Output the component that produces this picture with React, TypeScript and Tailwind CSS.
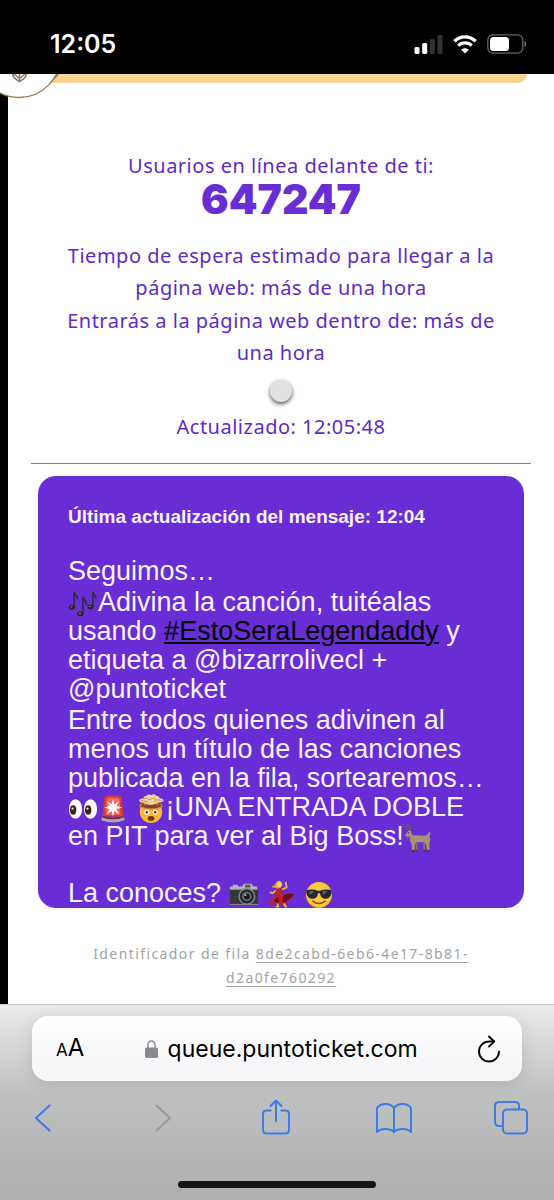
import type { ReactNode } from "react";

const StatusBar = () => {
  return (
    <header className="flex h-[74px] items-end justify-between bg-black pr-[27px] pb-[18px] pl-[50px] text-white">
      <time className="font-[Inter,sans-serif] text-[25px] leading-6 font-semibold">12:05</time>
      <div className="flex h-6 items-center gap-[10px]">
        <svg width="29" height="19" viewBox="0 0 28 19" role="img" aria-label="Señal">
          <rect x="0" y="12" width="5" height="7" rx="1.5" fill="#fff" />
          <rect x="7.700" y="8" width="5" height="11" rx="1.5" fill="#fff" />
          <rect x="15.400" y="4" width="5" height="15" rx="1.5" fill="#333" />
          <rect x="23" y="0" width="5" height="19" rx="1.5" fill="#333" />
        </svg>
        <svg width="24" height="19" viewBox="0 0 24 19" fill="none" role="img" aria-label="Wi-Fi">
          <path d="M1.300 6.200C7.500.4 16.500.4 22.700 6.200" stroke="#fff" strokeWidth="3.400" />
          <path d="M5.200 10.600c3.800-3.600 9.800-3.600 13.600 0" stroke="#fff" strokeWidth="3.200" />
          <path d="M8.200 14.700c2.300-2 5.300-2 7.600 0L12 18.600Z" fill="#fff" />
        </svg>
        <svg width="40" height="20" viewBox="0 0 40 20" fill="none" role="img" aria-label="Batería">
          <rect x=".8" y=".8" width="35" height="18.400" rx="5.500" stroke="#666" strokeWidth="1.300" />
          <rect x="3" y="3" width="19" height="14" rx="3.500" fill="#fff" />
          <path d="M37.500 6.800c2.300 1 2.300 5.400 0 6.400Z" fill="#777" />
        </svg>
      </div>
    </header>
  );
};

const Emoji = ({ label, children }: { label: string; children: ReactNode }) => {
  return (
    <svg viewBox="0 0 32 32" role="img" aria-label={label} className="-my-2 inline-block size-[30px] align-middle">
      {children}
    </svg>
  );
};

const Notes = () => (
  <Emoji label="notas musicales">
    <g fill="none" stroke="#2b2b36" strokeWidth="1.700">
      <path d="M6.500 19V3.500c1 3.500 4.500 3 3.500 7.500" />
      <path d="M16 25V8.500c1 4 4.500 4 3.500 8.500" />
      <path d="M26.500 18V3.500c1 3 4 3 3 7" />
    </g>
    <g fill="#24242b">
      <ellipse cx="4.200" cy="19.500" rx="3.300" ry="2.500" />
      <ellipse cx="13.300" cy="26.500" rx="3.500" ry="2.600" />
      <ellipse cx="24" cy="19" rx="3.300" ry="2.500" />
    </g>
    <g fill="#8d8d99">
      <ellipse cx="3.500" cy="19" rx="1.200" ry=".7" />
      <ellipse cx="12.600" cy="26" rx="1.200" ry=".7" />
      <ellipse cx="23.300" cy="18.500" rx="1.200" ry=".7" />
    </g>
  </Emoji>
);

const Eyes = () => (
  <Emoji label="ojos">
    <ellipse cx="8" cy="16" rx="7" ry="10.500" fill="#fff" />
    <ellipse cx="24" cy="16" rx="7" ry="10.500" fill="#fff" />
    <ellipse cx="5.500" cy="17" rx="3.400" ry="5" fill="#3c2415" />
    <ellipse cx="21.500" cy="17" rx="3.400" ry="5" fill="#3c2415" />
    <circle cx="4.800" cy="15.500" r="1.200" fill="#eee" />
    <circle cx="20.800" cy="15.500" r="1.200" fill="#eee" />
  </Emoji>
);

const Siren = () => (
  <Emoji label="sirena">
    <path d="M5 24 6.500 5Q7 1.500 11 1.500h10Q25 1.500 25.500 5L27 24Z" fill="#d93a3c" />
    <path d="M8 22 9.500 6Q10 4 12 4h8q2.500 0 3 3l1 15Z" fill="#ee6b65" />
    <path d="m16 5 1.600 6 5-3.500-3 5 6 2-6 1.500 3 5.500-5-3.500L16 24l-1.600-6-5 3.500 3-5.500-6-1.500 6-2-3-5 5 3.500Z" fill="#fff4ef" />
    <path d="M4.500 23q11.500 4 23 0l.8 5q-12.300 5-24.600 0Z" fill="#a5aab5" />
    <path d="M4.500 23q11.500 4 23 0v2q-11.500 4-23 0Z" fill="#7c2835" />
  </Emoji>
);

const MindBlown = () => (
  <Emoji label="cabeza explotando">
    <circle cx="16" cy="19" r="12" fill="#f8b92f" />
    <path d="M3.500 14Q16 19 28.500 14l-1-4h-23Z" fill="#d28b24" />
    <path d="M5 13l2-4 3 3 3-4 3 4 3-4 3 4 3-3 2 4q-11 5-22 0Z" fill="#8c4034" />
    <path d="M9 9Q4 10 3 6.500 5 4.500 8 5q-.5-3 3-3 2-2.500 5-1 4-2 6 1 3 0 3 2.500 4 0 4.500 3Q26 10 22 8.500q-1 3-6 3T9 9Z" fill="#f4d6a2" />
    <path d="M8 5q4-2 6 1 4-3 8 0M5 7q5 0 8 2M19 8q4-3 9-1" fill="none" stroke="#c49058" />
    <circle cx="11.500" cy="19.500" r="2.700" fill="#fff" />
    <circle cx="20.500" cy="19.500" r="2.700" fill="#fff" />
    <circle cx="11.500" cy="19.500" r="1.300" fill="#633016" />
    <circle cx="20.500" cy="19.500" r="1.300" fill="#633016" />
    <ellipse cx="16" cy="26" rx="3.500" ry="2.500" fill="#713515" />
  </Emoji>
);

const Goat = () => (
  <Emoji label="cabra">
    <path d="M7 8 9 13l13 .5q3 0 4.500-4l2 1-1.500 4q2 3 0 7l.5 7.500h-3l-1-6-2.500-2.500h-8l-1.500 3v6H8.500l-.5-7Q5.500 19 6 14l-3 1-2-2 4-5Z" fill="#a39478" />
    <path d="M5 8Q3 3 .5 3M7 8Q7 3 3.500 1.500" fill="none" stroke="#6e6252" strokeWidth="1.400" />
    <path d="M3 14l1 4 1-4" fill="#83755d" />
    <circle cx="4.800" cy="10.500" r=".7" fill="#2a2320" />
    <path d="M13.500 21v8M21.500 21v8" stroke="#83755d" strokeWidth="2" />
    <path d="M8.500 28.500h3V31h-3ZM24.500 28.500h3V31h-3ZM12.500 28.500h2V31h-2ZM20.500 28.500h2V31h-2Z" fill="#4b4036" />
  </Emoji>
);

const Camera = () => (
  <Emoji label="cámara">
    <path d="M4 5h5l1 2h4l2-3h8l2 3h4v5H1V7h3Z" fill="#b4b6b8" />
    <rect x="1" y="10" width="30" height="16" rx="1" fill="#35373b" />
    <path d="M1 10h30M1 26h30" stroke="#8c8e91" />
    <rect x="17" y="5" width="6" height="3" fill="#55585d" />
    <circle cx="19" cy="17.500" r="9" fill="#85888c" />
    <circle cx="19" cy="17.500" r="7.500" fill="#24262a" />
    <circle cx="19" cy="17.500" r="5" fill="#68717a" />
    <circle cx="19" cy="17.500" r="3.200" fill="#17191d" />
    <circle cx="17.500" cy="16" r="1.200" fill="#aebac4" />
  </Emoji>
);

const Dancer = () => (
  <Emoji label="bailarina">
    <path d="M12 10 7 14l-3-1M17 10l5-2-1-6" fill="none" stroke="#f0b43c" strokeWidth="2" strokeLinejoin="round" />
    <path d="M11 2q5-3 6 2l-1 4q-4 3-6 0-3 1-4-1 4-1 5-5Z" fill="#e8ad2c" />
    <circle cx="14.500" cy="5" r="2.600" fill="#f9d36c" />
    <path d="M11 9h6l1 7 6-2q4-2 6 1-2 5-6 7 0 3-6 5l-7-2q-4 2-9 0 1-4 6-5Z" fill="#bd1f2b" />
    <path d="M18 17q5-4 12-2-3 5-7 6 0 3-5 3ZM8 22l5-4 1 7Z" fill="#5f1420" />
    <path d="m12 25 1 3-4 2M19 25l3 5" fill="none" stroke="#f0b43c" strokeWidth="2" />
    <path d="M8 29h4v1.500H8ZM21 29h4v1.500h-4Z" fill="#b61c28" />
  </Emoji>
);

const Sunglasses = () => (
  <Emoji label="gafas de sol">
    <circle cx="16" cy="16" r="14" fill="#efa52c" />
    <circle cx="16" cy="15.500" r="13" fill="#fcc93e" />
    <path d="M2.500 11Q9 9 15 11.500h2Q23 9 29.500 11v2q-1 7-6.500 7-5 0-6-6h-2q-1 6-6 6-5.500 0-6.500-7Z" fill="#26282d" />
    <path d="m6 12 5 0-5 4ZM20 12h5l-5 4Z" fill="#636b73" />
    <path d="M9.500 22.500q6.500 5 13 0" fill="none" stroke="#8c5017" strokeWidth="1.600" strokeLinecap="round" />
  </Emoji>
);

const Message = () => {
  return (
    <article className="mx-[7px] mt-3 overflow-hidden rounded-[18px] bg-[#682dd4] pt-[29px] pr-4 pl-[30px] text-left font-['Liberation_Sans',Arial,sans-serif] text-[27px] leading-[29px] text-[#f8f2ff]">
      <h2 className="text-[19px] leading-6 font-bold">Última actualización del mensaje: 12:04</h2>
      <div className="mt-7 space-y-[2px] whitespace-nowrap">
        <p>Seguimos…</p>
        <p>
          <Notes />
          Adivina la canción, tuitéalas
          <br />
          usando{" "}
          <a href="#EstoSeraLegendaddy" className="text-black underline decoration-2 underline-offset-2">
            #EstoSeraLegendaddy
          </a>{" "}
          y
          <br />
          etiqueta a @bizarrolivecl +
          <br />
          @puntoticket
        </p>
        <p>
          Entre todos quienes adivinen al
          <br />
          menos un título de las canciones
          <br />
          publicada en la fila, sortearemos…
          <br />
          <Eyes />
          <Siren /> <MindBlown />
          ¡UNA ENTRADA DOBLE
          <br />
          en PIT para ver al Big Boss!
          <Goat />
        </p>
      </div>
      <p className="mt-7 whitespace-nowrap">
        La conoces? <Camera /> <Dancer /> <Sunglasses />
      </p>
    </article>
  );
};

const Queue = () => {
  return (
    <main className="relative flex-1 border-l-8 border-black bg-white px-[23px] pb-3 text-center font-['Noto_Sans','Open_Sans',sans-serif]">
      <div className="mr-1 ml-5 h-[9px] rounded-br-[14px] bg-[#f8d594]" />
      <svg width="70" height="25" viewBox="0 0 70 25" aria-hidden="true" className="absolute top-0 -left-2">
        <circle cx="19" cy="-18" r="41.500" fill="#fff" stroke="#967a4f" strokeWidth="1.300" />
        <path d="M49 9Q54 5 56 0h3q-4 6-10 9Z" fill="#967a4f" />
        <path d="M12.500 0q1 4.500 7 7.500 6-3 7-7.500M19.500 0v7M14 0l5.500 4.500L25 0" fill="none" stroke="#8e7b70" strokeWidth="1.600" />
      </svg>

      <section className="text-xl leading-8 tracking-wide text-[#5f2bc6]">
        <p className="mt-[67px]">Usuarios en línea delante de ti:</p>
        <p className="font-[Inter,sans-serif] text-[41px] leading-[34px] font-black tracking-normal text-[#682dd4]">647247</p>
        <div className="mt-6 space-y-px">
          <p>
            Tiempo de espera estimado para llegar a la
            <br />
            página web: más de una hora
          </p>
          <p>
            Entrarás a la página web dentro de: más de
            <br />
            una hora
          </p>
        </div>
        <div className="mx-auto mt-[11px] size-[22px] rounded-full bg-[#e1e1e1] shadow-[0_2px_4px_#555]" />
        <p className="mt-[9px]">Actualizado: 12:05:48</p>
      </section>

      <hr className="mt-5 border-t-[#808080]" />
      <Message />

      <p className="mt-[34px] text-sm leading-6 tracking-widest text-[#a3a3a3]">
        Identificador de fila{" "}
        <a href="#fila" className="underline underline-offset-3">
          8de2cabd-6eb6-4e17-8b81-
          <br />
          d2a0fe760292
        </a>
      </p>
    </main>
  );
};

const BrowserBar = () => {
  return (
    <footer className="border-t border-[#c9c9cb] bg-linear-to-b from-[#ebebec] via-[#bfc0c2] via-45% to-[#afafaf] pt-[11px] pb-3">
      <form className="mx-8 flex h-[65px] items-center justify-between rounded-2xl bg-linear-to-b from-white to-[#f5f5f8] pr-[22px] pl-6 font-[Inter,sans-serif] text-black shadow-[0_2px_16px_#0000001f]">
        <button type="button" aria-label="Tamaño del texto" className="flex items-baseline leading-8">
          <span className="text-[17px]">A</span>
          <span className="text-2xl">A</span>
        </button>
        <div className="flex items-center gap-[10px]">
          <svg width="13" height="18" viewBox="0 0 13 18" aria-hidden="true">
            <path d="M3 8V4.500a3.500 3.500 0 0 1 7 0V8" fill="none" stroke="#8a8a8e" strokeWidth="1.500" />
            <rect y="7.500" width="13" height="10.500" rx="1.800" fill="#8a8a8e" />
          </svg>
          <input aria-label="Dirección" defaultValue="queue.puntoticket.com" className="field-sizing-content bg-transparent text-[23px] leading-8 outline-none" />
        </div>
        <button type="button" aria-label="Recargar">
          <svg width="22" height="28" viewBox="0 0 22 28" fill="none" stroke="#050505" strokeWidth="1.900" strokeLinecap="round" strokeLinejoin="round">
            <path d="M21 16.500A10 10 0 1 1 11 6.500q2.500-.2 5 0" />
            <path d="m11 1.500 5.200 5L11 11.500" />
          </svg>
        </button>
      </form>

      <nav className="mx-[26px] mt-4 flex h-[42px] items-center justify-between text-[#3c7bea]">
        <button type="button" aria-label="Atrás">
          <svg width="34" height="34" viewBox="0 0 34 34" fill="none" stroke="currentColor" strokeWidth="2" strokeLinecap="round" strokeLinejoin="round">
            <path d="M23.500 4.500 10 17l13.500 12.500" />
          </svg>
        </button>
        <button type="button" aria-label="Adelante" disabled className="text-[#9b9b9d]">
          <svg width="34" height="34" viewBox="0 0 34 34" fill="none" stroke="currentColor" strokeWidth="2" strokeLinecap="round" strokeLinejoin="round">
            <path d="M13.500 4.500 27 17 13.500 29.500" />
          </svg>
        </button>
        <button type="button" aria-label="Compartir">
          <svg width="34" height="38" viewBox="0 0 34 38" fill="none" stroke="currentColor" strokeWidth="2" strokeLinecap="round" strokeLinejoin="round">
            <path d="M11.500 11.500H7.500Q4 11.500 4 15v16q0 3.500 3.500 3.500h19Q30 34.500 30 31V15q0-3.500-3.500-3.500h-4M17 22V1.500M11.500 7 17 1.500 22.500 7" />
          </svg>
        </button>
        <button type="button" aria-label="Marcadores">
          <svg width="36" height="34" viewBox="0 0 36 34" fill="none" stroke="currentColor" strokeWidth="2" strokeLinejoin="round">
            <path d="M18 7Q15 3 9.500 3T1 7v24q3-3 8.500-3t8.500 3q3-3 8.500-3t8.500 3V7q-3-4-8.500-4T18 7Zm0 0v24" />
          </svg>
        </button>
        <button type="button" aria-label="Pestañas">
          <svg width="34" height="34" viewBox="0 0 34 34" fill="none" stroke="currentColor" strokeWidth="2" strokeLinejoin="round">
            <path d="M9 25H5q-4 0-4-4V5q0-4 4-4h16q4 0 4 4v3.500" />
            <rect x="9" y="8.500" width="24" height="24" rx="4" />
          </svg>
        </button>
      </nav>
      <div className="mx-auto mt-[42px] h-[7px] w-[198px] rounded-full bg-[#161616]" />
    </footer>
  );
};

const App = () => {
  return (
    <div className="flex min-h-screen flex-col bg-white">
      <StatusBar />
      <Queue />
      <BrowserBar />
    </div>
  );
};

export default App;
